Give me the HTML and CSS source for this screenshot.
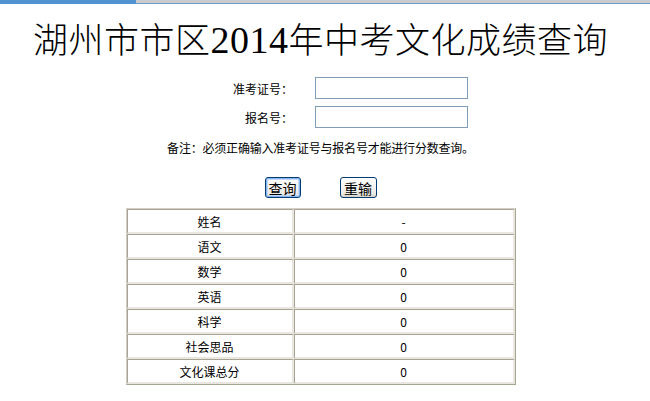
FILE: index.html
```html
<!DOCTYPE html>
<html lang="zh-CN">
<head>
<meta charset="utf-8">
<link rel="stylesheet" href="styles.css">
</head>
<body>
<div class="topbar"><div class="tb-blue"></div><div class="tb-grey"></div></div>
<div class="page">
  <h1 class="title">湖州市市区<span class="num">2014</span>年中考文化成绩查询</h1>
  <div class="form">
    <div class="row"><label class="lbl">准考证号：</label><input class="inp" type="text"></div>
    <div class="row"><label class="lbl">报名号：</label><input class="inp" type="text"></div>
  </div>
  <p class="note">备注：必须正确输入准考证号与报名号才能进行分数查询。</p>
  <div class="btns">
    <button class="btn btn-default">查询</button>
    <button class="btn">重输</button>
  </div>
  <table class="score">
    <tr><td class="k">姓名</td><td class="v">-</td></tr>
    <tr><td class="k">语文</td><td class="v">0</td></tr>
    <tr><td class="k">数学</td><td class="v">0</td></tr>
    <tr><td class="k">英语</td><td class="v">0</td></tr>
    <tr><td class="k">科学</td><td class="v">0</td></tr>
    <tr><td class="k">社会思品</td><td class="v">0</td></tr>
    <tr><td class="k">文化课总分</td><td class="v">0</td></tr>
  </table>
</div>
</body>
</html>
```
FILE: styles.css
```css
html, body {
  margin: 0;
  padding: 0;
  background: #ffffff;
}
body {
  font-family: "Noto Sans CJK SC", "Liberation Sans", sans-serif;
  font-size: 12px;
  color: #000;
  width: 650px;
  height: 401px;
  overflow: hidden;
}
.topbar {
  display: flex;
  height: 4px;
}
.tb-blue {
  width: 136px;
  background: #5193d0;
}
.tb-grey {
  flex: 1;
  height: 3px;
  background: #c9cbcc;
  border-bottom: 1px solid #6e9ec9;
}
.page {
  width: 641px;
  display: flex;
  flex-direction: column;
  align-items: center;
}
.title {
  margin: 12px 0 0 0;
  font-family: "Noto Sans CJK SC", sans-serif;
  font-weight: 300;
  font-size: 35px;
  line-height: 44px;
  letter-spacing: 0.5px;
  white-space: nowrap;
}
.title .num {
  font-family: "Liberation Serif", serif;
  font-size: 38px;
}
.form {
  margin-top: 15px;
  width: 641px;
  display: flex;
  flex-direction: column;
  gap: 7px;
}
.row {
  display: flex;
  align-items: center;
  gap: 22px;
}
.lbl {
  width: 293px;
  text-align: right;
  font-size: 12px;
  line-height: 21px;
}
.inp {
  box-sizing: border-box;
  width: 153px;
  height: 22px;
  margin: 0;
  border: 1px solid #7f9db9;
  padding: 0;
  background: #fff;
}
.note {
  margin: 12px 0 0 0;
  font-size: 12px;
  line-height: 16px;
  letter-spacing: -0.2px;
}
.btns {
  margin-top: 21px;
  display: flex;
  gap: 39px;
  padding-left: 0;
}
.btn {
  box-sizing: border-box;
  height: 21px;
  width: 37px;
  padding: 0;
  font-family: "Noto Sans CJK SC", sans-serif;
  font-size: 14px;
  line-height: 16px;
  background: linear-gradient(#ffffff, #ecebe6 80%, #d6d0c5);
  border: 1px solid #003c74;
  border-radius: 3px;
  color: #000;
}
.btn-default {
  box-shadow: inset 0 0 0 1px #8bb5ee, inset 0 0 0 2px #c1d8f7;
  width: 36px;
}
.score {
  margin-top: 10px;
  width: 390px;
  border-collapse: separate;
  border-spacing: 0;
  border: 1px solid;
  border-color: #d4d0c8 #a6a393 #a6a393 #d4d0c8;
}
.score td {
  height: 22px;
  padding: 0;
  text-align: center;
  font-size: 12px;
  border: 1px solid;
  border-color: #a6a393 #e8e6df #e8e6df #a6a393;
  border-width: 1px 2px 2px 1px;
}
.score td.k {
  width: 164px;
}
```
